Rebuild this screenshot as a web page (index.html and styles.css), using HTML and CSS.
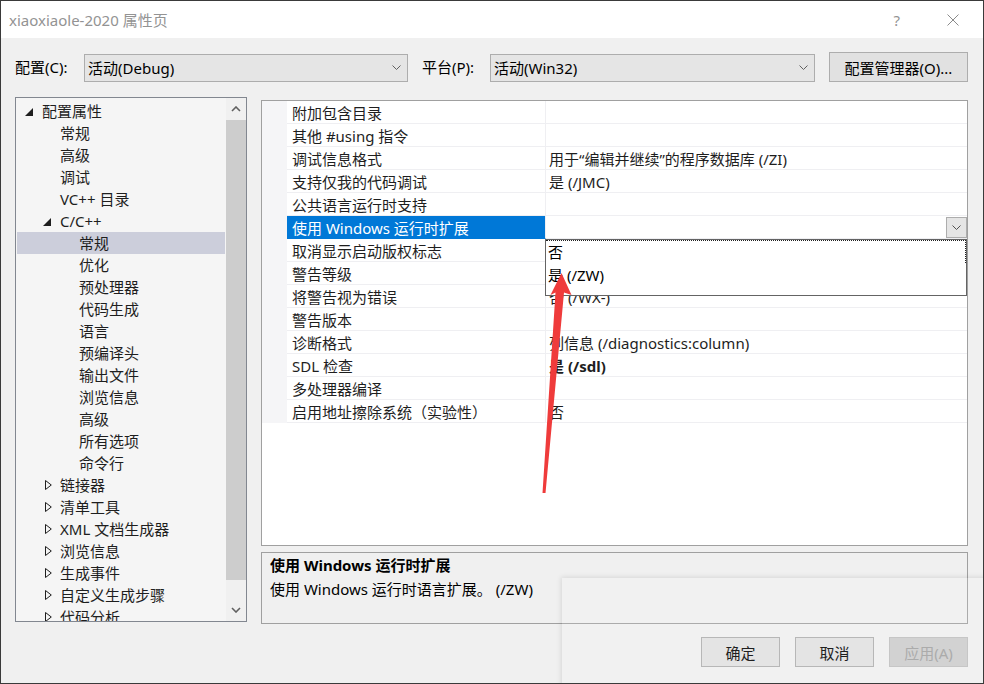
FILE: index.html
```html
<!DOCTYPE html>
<html lang="zh-CN">
<head>
<meta charset="utf-8">
<title>xiaoxiaole-2020 属性页</title>
<link rel="stylesheet" href="styles.css">
</head>
<body>
<div class="window">
  <div class="titlebar">
    <span class="title">xiaoxiaole-2020 属性页</span>
    <span class="help">?</span>
    <svg class="close" width="12" height="12" viewBox="0 0 12 12"><path d="M0.5 0.5 L11.5 11.5 M11.5 0.5 L0.5 11.5" stroke="#8a8a8a" stroke-width="1" fill="none"/></svg>
  </div>
  <div class="content">
    <div class="config-row">
      <span class="lbl lbl-config">配置(C):</span>
      <div class="combo combo-config"><span class="combo-text">活动(Debug)</span><svg class="chev" width="9" height="5" viewBox="0 0 9 5"><polyline points="0.5,0.5 4.5,4.5 8.5,0.5" fill="none" stroke="#606060" stroke-width="1"/></svg></div>
      <span class="lbl lbl-platform">平台(P):</span>
      <div class="combo combo-platform"><span class="combo-text">活动(Win32)</span><svg class="chev" width="9" height="5" viewBox="0 0 9 5"><polyline points="0.5,0.5 4.5,4.5 8.5,0.5" fill="none" stroke="#606060" stroke-width="1"/></svg></div>
      <button class="btn btn-mgr">配置管理器(O)...</button>
    </div>
    <div class="main">
      <div class="tree">
        <div class="tree-items">
          <div class="ti l0"><span class="tg"><svg class="tri-open" width="8" height="8" viewBox="0 0 8 8"><polygon points="8,0 8,8 0,8" fill="#1e1e1e"/></svg></span>配置属性</div>
          <div class="ti l1"><span class="tg"></span>常规</div>
          <div class="ti l1"><span class="tg"></span>高级</div>
          <div class="ti l1"><span class="tg"></span>调试</div>
          <div class="ti l1"><span class="tg"></span>VC++ 目录</div>
          <div class="ti l1"><span class="tg"><svg class="tri-open" width="8" height="8" viewBox="0 0 8 8"><polygon points="8,0 8,8 0,8" fill="#1e1e1e"/></svg></span>C/C++</div>
          <div class="ti l2 sel"><span class="tg"></span>常规</div>
          <div class="ti l2"><span class="tg"></span>优化</div>
          <div class="ti l2"><span class="tg"></span>预处理器</div>
          <div class="ti l2"><span class="tg"></span>代码生成</div>
          <div class="ti l2"><span class="tg"></span>语言</div>
          <div class="ti l2"><span class="tg"></span>预编译头</div>
          <div class="ti l2"><span class="tg"></span>输出文件</div>
          <div class="ti l2"><span class="tg"></span>浏览信息</div>
          <div class="ti l2"><span class="tg"></span>高级</div>
          <div class="ti l2"><span class="tg"></span>所有选项</div>
          <div class="ti l2"><span class="tg"></span>命令行</div>
          <div class="ti l1"><span class="tg"><svg class="tri-closed" width="7" height="10" viewBox="0 0 7 10"><polygon points="0.5,0.5 6.3,5 0.5,9.5" fill="none" stroke="#1e1e1e" stroke-width="1"/></svg></span>链接器</div>
          <div class="ti l1"><span class="tg"><svg class="tri-closed" width="7" height="10" viewBox="0 0 7 10"><polygon points="0.5,0.5 6.3,5 0.5,9.5" fill="none" stroke="#1e1e1e" stroke-width="1"/></svg></span>清单工具</div>
          <div class="ti l1"><span class="tg"><svg class="tri-closed" width="7" height="10" viewBox="0 0 7 10"><polygon points="0.5,0.5 6.3,5 0.5,9.5" fill="none" stroke="#1e1e1e" stroke-width="1"/></svg></span>XML 文档生成器</div>
          <div class="ti l1"><span class="tg"><svg class="tri-closed" width="7" height="10" viewBox="0 0 7 10"><polygon points="0.5,0.5 6.3,5 0.5,9.5" fill="none" stroke="#1e1e1e" stroke-width="1"/></svg></span>浏览信息</div>
          <div class="ti l1"><span class="tg"><svg class="tri-closed" width="7" height="10" viewBox="0 0 7 10"><polygon points="0.5,0.5 6.3,5 0.5,9.5" fill="none" stroke="#1e1e1e" stroke-width="1"/></svg></span>生成事件</div>
          <div class="ti l1"><span class="tg"><svg class="tri-closed" width="7" height="10" viewBox="0 0 7 10"><polygon points="0.5,0.5 6.3,5 0.5,9.5" fill="none" stroke="#1e1e1e" stroke-width="1"/></svg></span>自定义生成步骤</div>
          <div class="ti l1"><span class="tg"><svg class="tri-closed" width="7" height="10" viewBox="0 0 7 10"><polygon points="0.5,0.5 6.3,5 0.5,9.5" fill="none" stroke="#1e1e1e" stroke-width="1"/></svg></span>代码分析</div>
        </div>
        <div class="vscroll">
          <div class="sb-btn"><svg width="10" height="6" viewBox="0 0 10 6"><polyline points="1,5 5,1 9,5" fill="none" stroke="#606060" stroke-width="1.6"/></svg></div>
          <div class="sb-thumb"></div>
          <div class="sb-track"></div>
          <div class="sb-btn"><svg width="10" height="6" viewBox="0 0 10 6"><polyline points="1,1 5,5 9,1" fill="none" stroke="#606060" stroke-width="1.6"/></svg></div>
        </div>
      </div>
      <div class="right">
        <div class="grid">
          <div class="pg-row"><div class="pg-m"></div><div class="pg-n">附加包含目录</div><div class="pg-v"></div></div>
          <div class="pg-row"><div class="pg-m"></div><div class="pg-n">其他 #using 指令</div><div class="pg-v"></div></div>
          <div class="pg-row"><div class="pg-m"></div><div class="pg-n">调试信息格式</div><div class="pg-v">用于“编辑并继续”的程序数据库 (/ZI)</div></div>
          <div class="pg-row"><div class="pg-m"></div><div class="pg-n">支持仅我的代码调试</div><div class="pg-v">是 (/JMC)</div></div>
          <div class="pg-row"><div class="pg-m"></div><div class="pg-n">公共语言运行时支持</div><div class="pg-v"></div></div>
          <div class="pg-row"><div class="pg-m"></div><div class="pg-n sel">使用 Windows 运行时扩展</div><div class="pg-v edit"><span class="dd-btn"><svg width="9" height="5" viewBox="0 0 9 5"><polyline points="0.5,0.5 4.5,4.5 8.5,0.5" fill="none" stroke="#505050" stroke-width="1"/></svg></span></div></div>
          <div class="pg-row"><div class="pg-m"></div><div class="pg-n">取消显示启动版权标志</div><div class="pg-v">是 (/nologo)</div></div>
          <div class="pg-row"><div class="pg-m"></div><div class="pg-n">警告等级</div><div class="pg-v">等级 3 (/W3)</div></div>
          <div class="pg-row"><div class="pg-m"></div><div class="pg-n">将警告视为错误</div><div class="pg-v">否 (/WX-)</div></div>
          <div class="pg-row"><div class="pg-m"></div><div class="pg-n">警告版本</div><div class="pg-v"></div></div>
          <div class="pg-row"><div class="pg-m"></div><div class="pg-n">诊断格式</div><div class="pg-v">列信息 (/diagnostics:column)</div></div>
          <div class="pg-row"><div class="pg-m"></div><div class="pg-n">SDL 检查</div><div class="pg-v bold">是 (/sdl)</div></div>
          <div class="pg-row"><div class="pg-m"></div><div class="pg-n">多处理器编译</div><div class="pg-v"></div></div>
          <div class="pg-row"><div class="pg-m"></div><div class="pg-n">启用地址擦除系统（实验性）</div><div class="pg-v">否</div></div>
          <div class="dropdown">
            <div class="dd-item focus">否</div>
            <div class="dd-item">是 (/ZW)</div>
          </div>
        </div>
        <div class="desc">
          <div class="desc-title">使用 Windows 运行时扩展</div>
          <div class="desc-text">使用 Windows 运行时语言扩展。 (/ZW)</div>
        </div>
      </div>
    </div>
    <div class="footer">
      <button class="btn btn-foot">确定</button>
      <button class="btn btn-foot">取消</button>
      <button class="btn btn-foot disabled">应用(A)</button>
    </div>
  </div>
  <div class="ghost"></div>
  <svg class="arrow" width="984" height="684" viewBox="0 0 984 684">
    <polygon points="561.5,273 571.5,295 564,292.5 545.5,493 542.5,493 555.5,292.5 550.5,295" fill="#ef3b3b"/>
  </svg>
</div>
</body>
</html>
```

FILE: styles.css
```css
* { box-sizing: border-box; }
html, body { margin: 0; padding: 0; }
body {
  width: 984px;
  height: 684px;
  overflow: hidden;
  font-family: "Noto Sans", "Noto Sans CJK SC", sans-serif;
  font-size: 15px;
  color: #1e1e1e;
  background: #f0f0f0;
}
.window {
  position: relative;
  width: 984px;
  height: 684px;
  border: 1px solid #3a3a3a;
  background: #f0f0f0;
  overflow: hidden;
}
.titlebar {
  height: 37px;
  background: #ffffff;
  display: flex;
  align-items: center;
  padding-left: 8px;
}
.title {
  color: #939393;
  font-size: 15px;
  line-height: 20px;
  flex: 1;
}
.help {
  color: #939393;
  font-size: 15px;
  line-height: 20px;
  margin-right: 47px;
}
.close { margin-right: 24px; }

.content { display: flex; flex-direction: column; }

.config-row {
  display: flex;
  align-items: center;
  height: 30px;
  margin-top: 14px;
  padding-left: 14px;
}
.lbl { line-height: 20px; color: #000; }
.lbl-config { width: 69px; }
.lbl-platform { width: 68px; margin-left: 14px; }
.combo {
  height: 28px;
  margin-top: 1px;
  border: 1px solid #adadad;
  background: #e5e5e5;
  display: flex;
  align-items: center;
  padding-left: 3px;
  color: #000;
}
.combo-text { flex: 1; line-height: 20px; }
.chev { margin-right: 6px; }
.combo-config { width: 324px; }
.combo-platform { width: 325px; }
.btn {
  font-family: inherit;
  font-size: 15px;
  color: #000;
  background: #e1e1e1;
  border: 1px solid #adadad;
  padding: 0;
  margin: 0;
}
.btn-mgr { width: 139px; height: 30px; margin-left: 14px; }

.main {
  display: flex;
  align-items: flex-start;
  margin-top: 15px;
  padding-left: 14px;
  gap: 14px;
}
.tree {
  width: 232px;
  height: 525px;
  border: 1px solid #828790;
  background: #f5f5f5;
  display: flex;
  overflow: hidden;
}
.tree-items {
  flex: 1;
  padding-top: 2px;
  overflow: hidden;
}
.ti {
  height: 22px;
  line-height: 22px;
  display: flex;
  align-items: center;
  white-space: nowrap;
  color: #1e1e1e;
}
.ti.l0 { padding-left: 8px; }
.ti.l1 { padding-left: 26px; }
.ti.l2 { padding-left: 45px; }
.ti.sel { background: #cccedb; margin: 0 1px; padding-left: 44px; }
.tg {
  width: 18px;
  height: 22px;
  flex: none;
  display: flex;
  align-items: center;
}
.tri-open { margin-left: 1px; margin-top: 2px; }
.tri-closed { margin-left: 3px; }

.vscroll {
  width: 20px;
  display: flex;
  flex-direction: column;
  background: #f0f0f0;
}
.sb-btn {
  height: 22px;
  display: flex;
  align-items: center;
  justify-content: center;
  flex: none;
}
.sb-thumb { height: 460px; background: #cdcdcd; flex: none; }
.sb-track { flex: 1; }

.right { width: 707px; display: flex; flex-direction: column; }
.grid {
  position: relative;
  margin-top: 3px;
  height: 446px;
  border: 1px solid #a0a0a0;
  background: #ffffff;
}
.pg-row {
  display: grid;
  grid-template-columns: 25px 259px 1fr;
  height: 23px;
}
.pg-m { background: #f5f5f7; }
.pg-n, .pg-v {
  height: 23px;
  border-bottom: 1px solid #efeff2;
  line-height: 24px;
  white-space: nowrap;
  overflow: hidden;
  color: #1e1e1e;
}
.pg-n { padding-left: 5px; border-right: 1px solid #efeff2; }
.pg-v { padding-left: 3px; }
.pg-v.bold { font-weight: 700; }
.pg-n.sel { background: #0078d7; color: #ffffff; border-bottom-color: #0078d7; }
.pg-v.edit {
  display: flex;
  justify-content: flex-end;
  align-items: center;
}
.dd-btn {
  width: 21px;
  height: 21px;
  border: 1px solid #adadad;
  background: #e5e5e5;
  display: flex;
  align-items: center;
  justify-content: center;
  margin-top: 1px;
}
.dropdown {
  position: absolute;
  left: 283px;
  top: 138px;
  right: 0;
  height: 57px;
  border: 1px solid #646464;
  background: #ffffff;
}
.dd-item {
  height: 23px;
  line-height: 24px;
  padding-left: 2px;
  color: #000;
}
.dd-item.focus {
  border-top: 1px dotted #222;
  border-right: 1px dotted #222;
  line-height: 23px;
}

.desc {
  margin-top: 6px;
  height: 72px;
  border: 1px solid #a0a0a0;
  padding-left: 8px;
  color: #000;
}
.desc-title { font-weight: 700; line-height: 24px; }
.desc-text { line-height: 24px; }

.footer {
  display: flex;
  justify-content: flex-end;
  gap: 15px;
  margin-top: 13px;
  padding-right: 15px;
}
.btn-foot { width: 79px; height: 30px; }
.btn-foot.disabled { background: #cccccc; border-color: #bfbfbf; color: #a0a0a0; }

.ghost {
  position: absolute;
  left: 561px;
  top: 577px;
  width: 430px;
  height: 120px;
  background: rgba(255, 255, 255, 0.12);
  box-shadow: -1px -1px 5px rgba(0, 0, 0, 0.10);
  pointer-events: none;
}
.arrow {
  position: absolute;
  left: -1px;
  top: -1px;
  pointer-events: none;
}
```
